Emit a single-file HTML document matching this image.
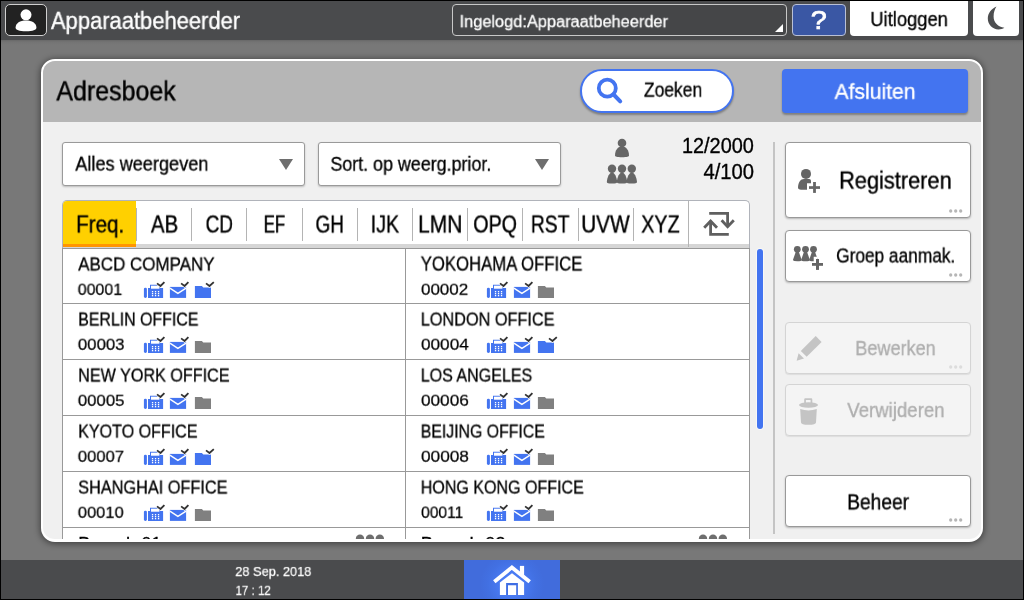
<!DOCTYPE html>
<html lang="nl">
<head>
<meta charset="utf-8">
<title>Adresboek</title>
<style>
*{box-sizing:border-box;margin:0;padding:0}
html,body{width:1024px;height:600px;overflow:hidden;background:#000}
body{font-family:"Liberation Sans",sans-serif;color:#000;position:relative}
#screen{position:absolute;left:0;top:0;width:1024px;height:600px;overflow:hidden;background:#000}
#screen div,#screen svg,#screen span{position:absolute}
.t{display:block;white-space:pre;line-height:1;transform-origin:0 0;will-change:transform;-webkit-text-stroke:.4px currentColor}
.topbar{left:1px;top:1px;width:1022px;height:39px;background:#4a4b4d}
.back{left:1px;top:40px;width:1022px;height:520px;background:linear-gradient(#686868 0,#747474 2px,#787878 5px,#787878 100%)}
.botbar{left:1px;top:560px;width:1022px;height:39px;background:#4a4b4d}
.userbox{left:5px;top:4px;width:42px;height:32px;background:#222;border:1px solid #d0d0d0;border-radius:5px}
.loginbox{left:452px;top:4px;width:335px;height:32px;background:#454648;border:1px solid #c8c8c8;border-radius:4px}
.helpbtn{left:792px;top:4px;width:54px;height:32px;background:#3a57a4;border:1px solid #b9c0d6;border-radius:4px}
.whitebtn{top:1px;height:35px;background:#fff;border-radius:0 0 4px 4px}
.home{left:464px;top:560px;width:96px;height:39px;background:radial-gradient(circle 32px at 50% 62%,#4b7ef8 0,#4a7cf5 30%,#4270e2 75%,#416cdc 100%)}
.dialog{left:41px;top:59px;width:942px;height:483px;background:#f0f0f0;border:2px solid #fff;border-bottom-width:3px;border-radius:14px;box-shadow:0 1px 6px 1px rgba(0,0,0,.45);overflow:hidden}
.dhead{left:43px;top:61px;width:938px;height:61px;background:#b6b6b6;border-radius:12px 12px 0 0}
.pill{left:580px;top:69px;width:154px;height:44px;background:#fff;border:2px solid #4374f0;border-radius:22px;box-shadow:0 2px 2px rgba(0,0,0,.3)}
.bluebtn{left:782px;top:69px;width:186px;height:44px;background:#4374f0;border-radius:4px;box-shadow:0 2px 2px rgba(0,0,0,.3)}
.dd{top:142px;width:243px;height:44px;background:#fff;border:1px solid #9a9a9a;border-radius:3px;box-shadow:0 1px 2px rgba(0,0,0,.22)}
.vline{left:773px;top:142px;width:2px;height:392px;background:#c4c4c4}
.tabs{left:62px;top:200px;width:688px;height:48px;background:#fff;border:1px solid #b0b3ba;border-bottom:0;border-radius:5px 5px 0 0;overflow:hidden}
.tabstrip{left:63px;top:244px;width:686px;height:4px;background:#d6d6d6}
.tabsel{left:63px;top:201px;width:73px;height:43px;background:#ffd000;border-radius:4px 0 0 0}
.tabsel2{left:63px;top:244px;width:73px;height:3px;background:#ff9500}
.tsep{top:208px;width:1px;height:33px;background:#b4b4b4}
.list{left:62px;top:248px;width:688px;height:300px;background:#fff;border:1px solid #999}
.hl{left:63px;width:686px;height:1px;background:#999}
.cl{left:405px;top:248px;width:1px;height:300px;background:#999}
.clip{left:0;top:0;width:1024px;height:539px;overflow:hidden}
.scroll{left:757px;top:249px;width:6px;height:179.5px;background:#4374f0;border-radius:3px;box-shadow:0 0 0 1px rgba(255,255,255,.55)}
.btn{left:785px;width:186px;background:#fff;border:1px solid #999;border-radius:4px;box-shadow:0 1px 2px rgba(0,0,0,.24)}
.btn.dis{background:#f4f4f4;border-color:#d4d4d4;box-shadow:0 1px 1px rgba(0,0,0,.08)}
.dots{left:949px;width:14px;height:4px;overflow:visible}
.dots circle{fill:#b6b6b6}
.dots.dis circle{fill:#dcdcdc}
</style>
</head>
<body>
<svg width="0" height="0" style="position:absolute">
<defs>
<g id="fax">
<rect x="0.9" y="7.7" width="3" height="10.2" rx="1.4" fill="#4374f0"/>
<path d="M5 8h15.1v9.9H5z M7 4.7h10.2v4H7z" fill="#4374f0"/>
<rect x="8" y="5.7" width="8.4" height="3" fill="#fff"/>
<g fill="#fff"><rect x="8.9" y="11" width="1.3" height="1.3"/><rect x="11.9" y="11" width="1.3" height="1.3"/><rect x="14.9" y="11" width="1.3" height="1.3"/><rect x="8.9" y="13" width="1.3" height="1.3"/><rect x="11.9" y="13" width="1.3" height="1.3"/><rect x="14.9" y="13" width="1.3" height="1.3"/><rect x="8.9" y="15" width="1.3" height="1.3"/><rect x="11.9" y="15" width="1.3" height="1.3"/><rect x="14.9" y="15" width="1.3" height="1.3"/></g>
<path d="M14 3.4 L17.5 6 L21.4 2.1" fill="none" stroke="#fff" stroke-width="3"/><path d="M14 3.4 L17.5 6 L21.4 2.1" fill="none" stroke="#333" stroke-width="1.8"/>
</g>
<g id="mail">
<rect x="0.9" y="6.9" width="16.2" height="11" fill="#4374f0"/>
<path d="M0.9 8.2 L8.9 13.3 L17.1 8.2" fill="none" stroke="#fff" stroke-width="1.4"/>
<path d="M12.1 3.4 L15.6 6 L19.4 2.1" fill="none" stroke="#fff" stroke-width="3"/><path d="M12.1 3.4 L15.6 6 L19.4 2.1" fill="none" stroke="#333" stroke-width="1.8"/>
</g>
<g id="fold">
<path d="M0.9 6h7l1.4 1.4h7.7v10.5H0.9z" fill="#4374f0"/>
<path d="M12 3.4 L15.5 6 L19.8 2.1" fill="none" stroke="#fff" stroke-width="3"/><path d="M12 3.4 L15.5 6 L19.8 2.1" fill="none" stroke="#333" stroke-width="1.8"/>
</g>
<g id="foldg">
<path d="M0.9 6h7l1.4 1.4h7.7v10.5H0.9z" fill="#808080"/>
</g>
<g id="person">
<circle cx="8" cy="5" r="4.3"/><path d="M1 17.5 C1 12 4 8.6 8 8.6 C12 8.6 15 12 15 17.5 C15 18.6 13 19.2 8 19.2 C3 19.2 1 18.6 1 17.5z"/>
</g>
<g id="group">
<g id="gp1"><circle cx="6" cy="4.8" r="4.2"/><path d="M0.8 18 C1.4 13 3.4 8.6 6 8.6 C8.6 8.6 10.6 13 11.2 18 C11.2 19 9.5 19.5 6 19.5 C2.5 19.5 0.8 19 0.8 18z"/></g>
<use href="#gp1" x="10"/><use href="#gp1" x="19.8"/>
</g>
<g id="tri"><path d="M0 0h14L7 11z" fill="#6e6e6e"/></g>
</defs>
</svg>

<div id="screen">
  <!-- top status bar -->
  <div class="topbar"></div>
  <div class="back"></div>
  <div class="userbox"></div>
  <svg style="left:15px;top:8px" width="22" height="24" viewBox="0 0 22 24"><circle cx="11" cy="6.8" r="5.5" fill="#fff"/><path d="M0.6 19.5 C0.6 15 5 12.4 11 12.4 C17 12.4 21.4 15 21.4 19.5 C21.4 22 18 23.2 11 23.2 C4 23.2 0.6 22 0.6 19.5z" fill="#fff"/></svg>
  <span class="t" style="left:50px;top:9px;font-size:23px;-webkit-text-stroke-width:0.37px;transform:translate(0.98px,0.91px) scale(0.954,1.016);color:#fff">Apparaatbeheerder</span>
  <div class="loginbox"></div>
  <span class="t" style="left:459px;top:13px;font-size:17px;-webkit-text-stroke-width:0.27px;transform:translate(0.54px,0.17px) scale(0.963,1.017);color:#fff">Ingelogd:Apparaatbeheerder</span>
  <svg style="left:775px;top:24px" width="8" height="8" viewBox="0 0 8 8"><path d="M8 0v8H0z" fill="#fff"/></svg>
  <div class="helpbtn"></div>
  <span class="t" style="left:810px;top:6px;font-size:25px;-webkit-text-stroke-width:0.7px;transform:translate(0.77px,0.87px) scale(1.151,1.059);color:#fff">?</span>
  <div class="whitebtn" style="left:850px;width:118px"></div>
  <span class="t" style="left:870px;top:9px;font-size:19.5px;-webkit-text-stroke-width:0.31px;transform:translate(0.31px,0.17px) scale(0.942,1.047)">Uitloggen</span>
  <div class="whitebtn" style="left:973px;width:46px"></div>
  <svg style="left:986px;top:5px" width="20" height="26" viewBox="0 0 20 26"><path d="M10.5 1.5 C5 4 1.8 8.5 1.8 13.5 C1.8 19.5 6.5 24.4 12.5 24.4 C14.8 24.4 16.8 23.8 18.4 22.8 C12 22 7.6 17.5 7.6 11.5 C7.6 7.5 8.8 4 10.5 1.5z" fill="#4d4e50"/></svg>

  <!-- dialog -->
  <div class="dialog"></div>
  <div class="dhead"></div>
  <span class="t" style="left:56px;top:77px;font-size:27px;-webkit-text-stroke-width:0.43px;transform:translate(0.38px,0.47px) scale(0.925,1.036)">Adresboek</span>
  <div class="pill"></div>
  <svg style="left:594px;top:76px" width="32" height="30" viewBox="0 0 32 30"><circle cx="13.3" cy="12.2" r="8.5" fill="none" stroke="#4374f0" stroke-width="3.8"/><path d="M19.6 18.5 L26.2 25.4" stroke="#4374f0" stroke-width="4" stroke-linecap="round"/></svg>
  <span class="t" style="left:643px;top:79px;font-size:19.5px;-webkit-text-stroke-width:0.31px;transform:translate(0.91px,0.81px) scale(0.896,1.07)">Zoeken</span>
  <div class="bluebtn"></div>
  <span class="t" style="left:834px;top:82px;font-size:21.5px;-webkit-text-stroke-width:0.34px;transform:translate(0.55px,0.25px) scale(0.982,0.973);color:#fff">Afsluiten</span>

  <div class="dd" style="left:62px"></div>
  <span class="t" style="left:75px;top:154px;font-size:19.5px;-webkit-text-stroke-width:0.31px;transform:translate(0.28px,0.7px) scale(0.93,0.995)">Alles weergeven</span>
  <svg style="left:279px;top:159px" width="14" height="11"><use href="#tri"/></svg>
  <div class="dd" style="left:318px"></div>
  <span class="t" style="left:330px;top:154px;font-size:19.5px;-webkit-text-stroke-width:0.31px;transform:translate(0.41px,0.92px) scale(0.916,0.988)">Sort. op weerg.prior.</span>
  <svg style="left:535px;top:159px" width="14" height="11"><use href="#tri"/></svg>

  <svg style="left:614px;top:137.7px" width="16" height="20" fill="#666"><use href="#person"/></svg>
  <svg style="left:606px;top:164.4px" width="32" height="20" fill="#666"><use href="#group"/></svg>
  <span class="t" style="left:681px;top:135px;font-size:19.5px;-webkit-text-stroke-width:0.31px;transform:translate(0.94px,0.75px) scale(1.021,1.109)">12/2000</span>
  <span class="t" style="left:703px;top:161px;font-size:19.5px;-webkit-text-stroke-width:0.31px;transform:translate(0.51px,0.73px) scale(1.036,1.109)">4/100</span>
  <div class="vline"></div>

  <!-- index tabs -->
  <div class="tabs"></div>
  <div class="tabstrip"></div>
  <div class="tabsel"></div>
  <div class="tabsel2"></div>
  <span class="t" style="left:76px;top:212px;font-size:23px;-webkit-text-stroke-width:0.37px;transform:translate(0.13px,0.55px) scale(0.896,1.04)">Freq.</span><span class="t" style="left:150px;top:212px;font-size:23px;-webkit-text-stroke-width:0.37px;transform:translate(0.89px,0.55px) scale(0.892,1.04)">AB</span><span class="t" style="left:205px;top:212px;font-size:23px;-webkit-text-stroke-width:0.37px;transform:translate(0.58px,0.52px) scale(0.828,1.04)">CD</span><span class="t" style="left:263px;top:212px;font-size:23px;-webkit-text-stroke-width:0.37px;transform:translate(0.73px,0.56px) scale(0.732,1.04)">EF</span><span class="t" style="left:315px;top:212px;font-size:23px;-webkit-text-stroke-width:0.37px;transform:translate(0.46px,0.6px) scale(0.824,1.04)">GH</span><span class="t" style="left:370px;top:212px;font-size:23px;-webkit-text-stroke-width:0.37px;transform:translate(0.63px,0.55px) scale(0.854,1.04)">IJK</span><span class="t" style="left:418px;top:212px;font-size:23px;-webkit-text-stroke-width:0.37px;transform:translate(0.08px,0.55px) scale(0.913,1.04)">LMN</span><span class="t" style="left:473px;top:212px;font-size:23px;-webkit-text-stroke-width:0.37px;transform:translate(0.24px,0.55px) scale(0.855,1.04)">OPQ</span><span class="t" style="left:530px;top:212px;font-size:23px;-webkit-text-stroke-width:0.37px;transform:translate(0.88px,0.55px) scale(0.839,1.04)">RST</span><span class="t" style="left:581px;top:212px;font-size:23px;-webkit-text-stroke-width:0.37px;transform:translate(0.25px,0.55px) scale(0.902,1.04)">UVW</span><span class="t" style="left:641px;top:212px;font-size:23px;-webkit-text-stroke-width:0.37px;transform:translate(0.26px,0.52px) scale(0.856,1.04)">XYZ</span>
  <div class="tsep" style="left:136px"></div><div class="tsep" style="left:191px"></div><div class="tsep" style="left:246px"></div><div class="tsep" style="left:302px"></div><div class="tsep" style="left:357px"></div><div class="tsep" style="left:412px"></div><div class="tsep" style="left:467px"></div><div class="tsep" style="left:522px"></div><div class="tsep" style="left:578px"></div><div class="tsep" style="left:633px"></div>
  <div class="tsep" style="left:688px;top:201px;height:46px"></div>
  <svg style="left:702px;top:210px" width="34" height="28" viewBox="0 0 34 28" fill="none" stroke="#5f5f5f" stroke-width="2.8"><path d="M7.2 3.4H25.6V17"/><path d="M19.6 10.2L25.6 16.6L31.8 10.2"/><path d="M26.8 24.4H8.6V10.8"/><path d="M2.2 17.8L8.6 11L15 17.8"/></svg>

  <!-- address list -->
  <div class="clip">
    <div class="list"></div>
    <div class="hl" style="top:303px"></div><div class="hl" style="top:359px"></div><div class="hl" style="top:415px"></div><div class="hl" style="top:471px"></div><div class="hl" style="top:527px"></div>
    <div class="cl"></div>
    <span class="t" style="left:78px;top:254px;font-size:18px;-webkit-text-stroke-width:0.29px;transform:translate(0.18px,0.56px) scale(0.942,1.064)">ABCD COMPANY</span><span class="t" style="left:77px;top:281px;font-size:16.5px;-webkit-text-stroke-width:0.25px;transform:translate(0.74px,0.74px) scale(0.967,0.936)">00001</span><svg style="left:143px;top:280px" width="72" height="20"><use href="#fax"/><use href="#mail" x="26"/><use href="#fold" x="51"/></svg>
    <span class="t" style="left:420px;top:254px;font-size:18px;-webkit-text-stroke-width:0.29px;transform:translate(0.72px,0.6px) scale(0.929,1.078)">YOKOHAMA OFFICE</span><span class="t" style="left:421px;top:281px;font-size:16.5px;-webkit-text-stroke-width:0.25px;transform:translate(0.06px,0.8px) scale(1.026,0.923)">00002</span><svg style="left:486px;top:280px" width="72" height="20"><use href="#fax"/><use href="#mail" x="27"/><use href="#foldg" x="51"/></svg>
    <span class="t" style="left:78px;top:309px;font-size:18px;-webkit-text-stroke-width:0.29px;transform:translate(0.18px,0.57px) scale(0.884,1.056)">BERLIN OFFICE</span><span class="t" style="left:77px;top:336px;font-size:16.5px;-webkit-text-stroke-width:0.25px;transform:translate(0.83px,0.79px) scale(1.017,0.93)">00003</span><svg style="left:143px;top:335px" width="72" height="20"><use href="#fax"/><use href="#mail" x="26"/><use href="#foldg" x="51"/></svg>
    <span class="t" style="left:420px;top:309px;font-size:18px;-webkit-text-stroke-width:0.29px;transform:translate(0.72px,0.54px) scale(0.904,1.036)">LONDON OFFICE</span><span class="t" style="left:421px;top:336px;font-size:16.5px;-webkit-text-stroke-width:0.25px;transform:translate(0.07px,0.81px) scale(1.039,0.922)">00004</span><svg style="left:486px;top:335px" width="72" height="20"><use href="#fax"/><use href="#mail" x="27"/><use href="#fold" x="51"/></svg>
    <span class="t" style="left:78px;top:365px;font-size:18px;-webkit-text-stroke-width:0.29px;transform:translate(0.18px,0.6px) scale(0.897,1.043)">NEW YORK OFFICE</span><span class="t" style="left:77px;top:392px;font-size:16.5px;-webkit-text-stroke-width:0.25px;transform:translate(0.83px,0.8px) scale(1.014,0.93)">00005</span><svg style="left:143px;top:391px" width="72" height="20"><use href="#fax"/><use href="#mail" x="26"/><use href="#foldg" x="51"/></svg>
    <span class="t" style="left:420px;top:365px;font-size:18px;-webkit-text-stroke-width:0.29px;transform:translate(0.72px,0.6px) scale(0.892,1.049)">LOS ANGELES</span><span class="t" style="left:421px;top:392px;font-size:16.5px;-webkit-text-stroke-width:0.25px;transform:translate(0.04px,0.81px) scale(1.039,0.922)">00006</span><svg style="left:486px;top:391px" width="72" height="20"><use href="#fax"/><use href="#mail" x="27"/><use href="#foldg" x="51"/></svg>
    <span class="t" style="left:78px;top:421px;font-size:18px;-webkit-text-stroke-width:0.29px;transform:translate(0.18px,0.61px) scale(0.892,1.049)">KYOTO OFFICE</span><span class="t" style="left:77px;top:448px;font-size:16.5px;-webkit-text-stroke-width:0.25px;transform:translate(0.81px,0.76px) scale(1.006,0.93)">00007</span><svg style="left:143px;top:447px" width="72" height="20"><use href="#fax"/><use href="#mail" x="26"/><use href="#fold" x="51"/></svg>
    <span class="t" style="left:420px;top:421px;font-size:18px;-webkit-text-stroke-width:0.29px;transform:translate(0.72px,0.61px) scale(0.88,1.062)">BEIJING OFFICE</span><span class="t" style="left:421px;top:448px;font-size:16.5px;-webkit-text-stroke-width:0.25px;transform:translate(0.06px,0.83px) scale(1.044,0.922)">00008</span><svg style="left:486px;top:447px" width="72" height="20"><use href="#fax"/><use href="#mail" x="27"/><use href="#foldg" x="51"/></svg>
    <span class="t" style="left:78px;top:477px;font-size:18px;-webkit-text-stroke-width:0.29px;transform:translate(0.18px,0.61px) scale(0.905,1.049)">SHANGHAI OFFICE</span><span class="t" style="left:77px;top:504px;font-size:16.5px;-webkit-text-stroke-width:0.25px;transform:translate(0.78px,0.82px) scale(1,0.923)">00010</span><svg style="left:143px;top:503px" width="72" height="20"><use href="#fax"/><use href="#mail" x="26"/><use href="#foldg" x="51"/></svg>
    <span class="t" style="left:420px;top:477px;font-size:18px;-webkit-text-stroke-width:0.29px;transform:translate(0.72px,0.6px) scale(0.891,1.049)">HONG KONG OFFICE</span><span class="t" style="left:421px;top:504px;font-size:16.5px;-webkit-text-stroke-width:0.25px;transform:translate(0.08px,0.6px) scale(0.944,0.945)">00011</span><svg style="left:486px;top:503px" width="72" height="20"><use href="#fax"/><use href="#mail" x="27"/><use href="#foldg" x="51"/></svg>
    <span class="t" style="left:78px;top:534px;font-size:18px;-webkit-text-stroke-width:0.29px;transform:translate(0.18px,0.15px) scale(1.015,1.041)">Branch 01</span><svg style="left:354px;top:534px" width="32" height="20" fill="#6e6e6e"><use href="#group"/></svg>
    <span class="t" style="left:420px;top:534px;font-size:18px;-webkit-text-stroke-width:0.29px;transform:translate(0.72px,0.21px) scale(1.035,1.038)">Branch 02</span><svg style="left:697px;top:534px" width="32" height="20" fill="#6e6e6e"><use href="#group"/></svg>
  </div>
  <div class="scroll"></div>

  <!-- side buttons -->
  <div class="btn" style="top:142px;height:76px"></div>
  <svg style="left:797px;top:168px" width="24" height="26" viewBox="0 0 24 26" fill="#656565"><circle cx="9" cy="5.9" r="5"/><path d="M1 19.4 C1.2 14.5 3.6 11 7 11 H12.2 Q14 11 14 12.8 V15.3 H10 V21.7 H4 Q1 21.4 1 19.4z"/><rect x="12" y="18.2" width="11" height="2.7"/><rect x="16.1" y="14" width="2.8" height="10.9"/></svg>
  <span class="t" style="left:839px;top:168px;font-size:24px;-webkit-text-stroke-width:0.38px;transform:translate(0.08px,0.64px) scale(0.908,1.015)">Registreren</span>
  <svg class="dots" style="top:209.2px" viewBox="0 0 14 4"><circle cx="1.7" cy="2" r="1.65"/><circle cx="6.7" cy="2" r="1.65"/><circle cx="11.7" cy="2" r="1.65"/></svg>
  <div class="btn" style="top:230px;height:52px"></div>
  <svg style="left:793px;top:245px" width="31" height="26" viewBox="0 0 31 26" fill="#656565"><circle cx="4.3" cy="4.3" r="3.4"/><path d="M2.9 6.6 L5.7 6.6 L8.7 15 Q8.7 16.3 4.3 16.3 Q-0.1 16.3 -0.1 15z"/><circle cx="12.5" cy="4.3" r="3.4"/><path d="M11.1 6.6 L13.9 6.6 L16.9 15 Q16.9 16.3 12.5 16.3 Q8.1 16.3 8.1 15z"/><circle cx="20.5" cy="4.3" r="3.4"/><path d="M19.1 6.6 L21.9 6.6 L24.9 15 Q24.9 16.3 20.5 16.3 Q16.1 16.3 16.1 15z"/><path d="M20.7 11.7h3.5v2h5v10h-8.5z" fill="#fff"/><rect x="19" y="18" width="11" height="2.8"/><rect x="23" y="14" width="3" height="10.9"/></svg>
  <span class="t" style="left:836px;top:246px;font-size:19.5px;-webkit-text-stroke-width:0.31px;transform:translate(0.16px,0.48px) scale(0.886,1.002)">Groep aanmak.</span>
  <svg class="dots" style="top:273.2px" viewBox="0 0 14 4"><circle cx="1.7" cy="2" r="1.65"/><circle cx="6.7" cy="2" r="1.65"/><circle cx="11.7" cy="2" r="1.65"/></svg>
  <div class="btn dis" style="top:322px;height:52px"></div>
  <svg style="left:796px;top:335px" width="27" height="27" viewBox="0 0 27 27" fill="#c4c4c4"><path d="M19.7 1 L25.6 6.9 L10.7 21.8 L4.8 15.9z"/><path d="M2.6 18.2 L8 23.6 L0.6 25.8z"/></svg>
  <span class="t" style="left:855px;top:339px;font-size:19.5px;-webkit-text-stroke-width:0.31px;transform:translate(0.28px,0.11px) scale(0.928,1.014);color:#adadad">Bewerken</span>
  <svg class="dots dis" style="top:365.2px" viewBox="0 0 14 4"><circle cx="1.7" cy="2" r="1.65"/><circle cx="6.7" cy="2" r="1.65"/><circle cx="11.7" cy="2" r="1.65"/></svg>
  <div class="btn dis" style="top:384px;height:52px"></div>
  <svg style="left:798px;top:397px" width="21" height="29" viewBox="0 0 21 29" fill="#c4c4c4"><path d="M6.2 6.5V2.4Q6.2 1.3 7.3 1.3H13.2Q14.3 1.3 14.3 2.4V6.5H12.6V3.1H7.9V6.5z"/><ellipse cx="10.5" cy="8" rx="9.5" ry="2.8"/><path d="M2.2 12 Q10.5 14.8 18.8 12 L18 25.4 Q17.8 27.8 10.5 27.8 Q3.2 27.8 3 25.4z"/></svg>
  <span class="t" style="left:847px;top:401px;font-size:19.5px;-webkit-text-stroke-width:0.31px;transform:translate(0.25px,0.09px) scale(0.955,0.998);color:#adadad">Verwijderen</span>
  <div class="btn" style="top:475px;height:52px"></div>
  <span class="t" style="left:847px;top:492px;font-size:21.5px;-webkit-text-stroke-width:0.34px;transform:translate(0.24px,0.48px) scale(0.891,1.025)">Beheer</span>
  <svg class="dots" style="top:518.2px" viewBox="0 0 14 4"><circle cx="1.7" cy="2" r="1.65"/><circle cx="6.7" cy="2" r="1.65"/><circle cx="11.7" cy="2" r="1.65"/></svg>

  <!-- bottom bar -->
  <div class="botbar"></div>
  <span class="t" style="left:235px;top:564px;font-size:15.5px;-webkit-text-stroke-width:0.25px;transform:translate(0.29px,0.12px) scale(0.825,0.912);color:#fff">28 Sep. 2018</span>
  <span class="t" style="left:235px;top:582px;font-size:15.5px;-webkit-text-stroke-width:0.25px;transform:translate(0.56px,0.92px) scale(0.742,0.92);color:#fff">17 : 12</span>
  <div class="home"></div>
  <svg style="left:490px;top:562px" width="44" height="36" viewBox="0 0 44 36"><rect x="29.9" y="3.9" width="4.2" height="10" fill="#fff"/><path d="M4.3 19.8 L21.9 5.4 L39.7 19.8" fill="none" stroke="#fff" stroke-width="3.8"/><path d="M22 11.2 L34.1 20.6 V33 H9.9 V20.6z" fill="#fff"/><path d="M16.1 33 V21.1 H27.9 V33 H26.2 V23.2 H18 V33z" fill="#3f6ee4"/></svg>
</div>
</body>
</html>
